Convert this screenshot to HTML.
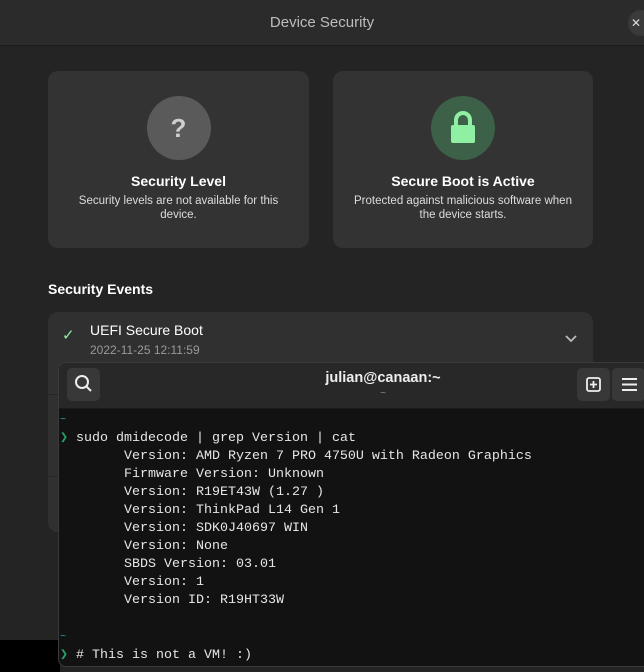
<!DOCTYPE html>
<html><head><style>
*{margin:0;padding:0;box-sizing:border-box}
body{width:644px;height:672px;overflow:hidden;background:#242424;font-family:"Liberation Sans",sans-serif;position:relative;color:#fff}
.hdr{position:absolute;left:0;top:0;width:644px;height:46px;background:#2b2b2b;border-bottom:1px solid #1a1a1a;text-align:center;line-height:46px;font-size:15px;color:#bdbdbd}
.close{position:absolute;left:628px;top:10px;width:26px;height:26px;border-radius:13px;background:#3a3a3a;color:#ddd;font-size:12px;line-height:26px;text-align:left;padding-left:3px}
.card{position:absolute;top:71px;width:261px;height:177px;background:#333;border-radius:10px;text-align:center}
.circ{width:64px;height:64px;border-radius:32px;margin:25px auto 0}
.t{font-weight:bold;font-size:14px;margin-top:13px}
.d{font-size:11.5px;color:#ddd;margin-top:5px;line-height:14px;padding:0 20px}
.mono{font-family:"Liberation Mono","DejaVu Sans Mono",monospace;font-size:13.33px;line-height:18px;white-space:pre;color:#e6e6e6}
.btn{position:absolute;top:5px;width:33px;height:33px;border-radius:5px;background:#383838}
</style></head><body>
<div class="hdr">Device Security<div class="close">✕</div></div>
<div class="card" style="left:48px">
<div class="circ" style="background:#5a5a5a;color:#cfcfcf;font-size:26px;font-weight:bold;line-height:64px">?</div>
<div class="t">Security Level</div>
<div class="d">Security levels are not available for this device.</div></div>
<div class="card" style="left:333px;width:260px">
<div class="circ" style="background:#3d6048;position:relative"><svg width="64" height="64" viewBox="0 0 64 64"><path d="M25 30v-6a7 7 0 0 1 14 0v6" stroke="#8ff0a4" stroke-width="4" fill="none"/><rect x="20" y="29" width="24" height="18" rx="2" fill="#8ff0a4"/></svg></div>
<div class="t">Secure Boot is Active</div>
<div class="d">Protected against malicious software when the device starts.</div></div>
<div style="position:absolute;left:48px;top:281px;font-weight:bold;font-size:14px">Security Events</div>
<div style="position:absolute;left:48px;top:312px;width:545px;height:220px;background:#303030;border-radius:10px"></div>
<div style="position:absolute;left:48px;top:394px;width:12px;height:1px;background:#262626"></div>
<div style="position:absolute;left:48px;top:476px;width:12px;height:1px;background:#262626"></div>
<div style="position:absolute;left:62px;top:326px;color:#8ff0a4;font-size:15px">✓</div>
<div style="position:absolute;left:90px;top:322px;font-size:14px">UEFI Secure Boot</div>
<div style="position:absolute;left:90px;top:343px;font-size:12px;color:#999">2022-11-25 12:11:59</div>
<svg style="position:absolute;left:564px;top:334px" width="14" height="10"><path d="M2 2l5 5 5-5" stroke="#bbb" stroke-width="1.8" fill="none"/></svg>
<div style="position:absolute;left:0;top:640px;width:60px;height:32px;background:#000"></div>
<div style="position:absolute;left:58px;top:362px;width:600px;height:305px;background:#121212;border:1px solid #3a3a3a;border-radius:8px 0 0 8px;overflow:hidden">
<div style="height:46px;background:#282828;border-bottom:1px solid #1a1a1a;position:relative">
<div class="btn" style="left:8px"><svg width="33" height="33"><circle cx="15" cy="14" r="6" stroke="#eee" stroke-width="2" fill="none"/><path d="M19.5 18.5l4.5 4.5" stroke="#eee" stroke-width="2"/></svg></div>
<div style="position:absolute;left:0;width:648px;top:7px;text-align:center;font-weight:bold;font-size:14.5px;color:#eee">julian@canaan:~</div>
<div style="position:absolute;left:0;width:648px;top:25px;text-align:center;font-size:10px;color:#888">~</div>
<div class="btn" style="left:518px"><svg width="33" height="33"><rect x="10" y="10" width="13" height="13" rx="2" stroke="#eee" stroke-width="1.8" fill="none"/><path d="M16.5 13v7M13 16.5h7" stroke="#eee" stroke-width="1.8"/></svg></div>
<div class="btn" style="left:553px"><svg width="33" height="33"><path d="M10 11h15M10 16.5h15M10 22h15" stroke="#eee" stroke-width="2"/></svg></div>
</div>
<div class="mono" style="position:absolute;left:1px;top:48px"><span style="color:#2aa1b3;font-size:10px">~</span>
<span style="color:#26a269;font-weight:bold;display:inline-block;width:16px">❯</span>sudo dmidecode | grep Version | cat
        Version: AMD Ryzen 7 PRO 4750U with Radeon Graphics
        Firmware Version: Unknown
        Version: R19ET43W (1.27 )
        Version: ThinkPad L14 Gen 1
        Version: SDK0J40697 WIN
        Version: None
        SBDS Version: 03.01
        Version: 1
        Version ID: R19HT33W

<span style="color:#2aa1b3;font-size:10px">~</span>
<span style="color:#26a269;font-weight:bold;display:inline-block;width:16px">❯</span># This is not a VM! :)</div>
</div>
</body></html>
